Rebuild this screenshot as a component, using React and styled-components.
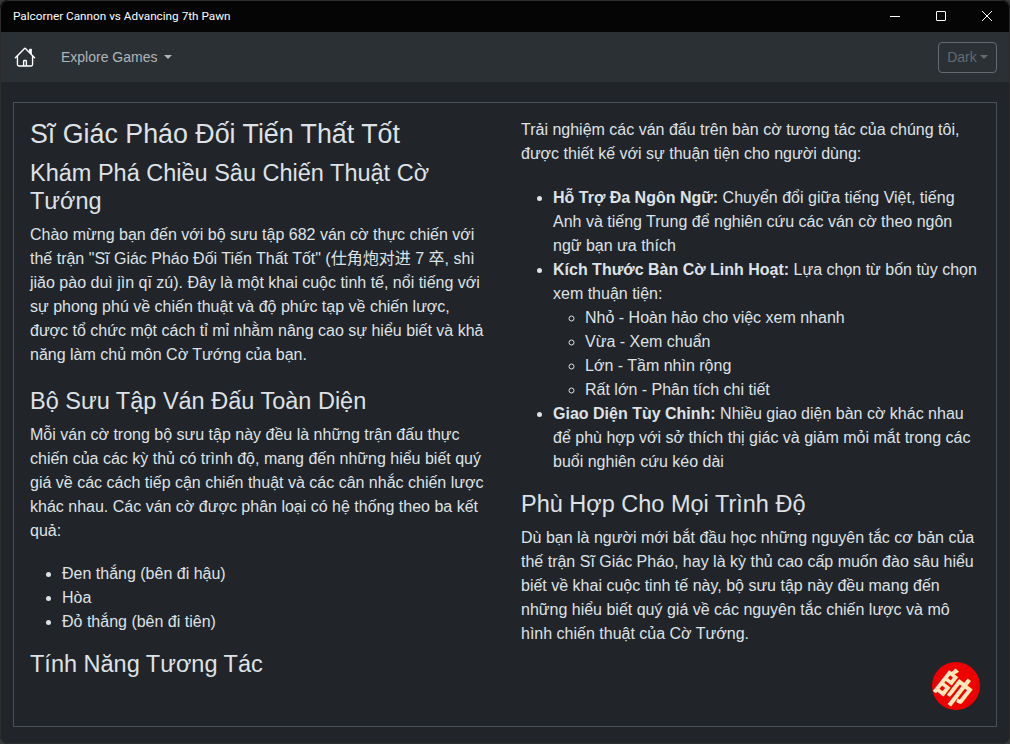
import React from 'react';
import styled, { createGlobalStyle } from 'styled-components';

const GlobalStyle = createGlobalStyle`
  html, body {
    margin: 0;
    height: 100%;
    background: #3a3a3a;
  }
  * {
    box-sizing: border-box;
  }
`;

const Win = styled.div`
  position: relative;
  width: 1010px;
  height: 744px;
  display: flex;
  flex-direction: column;
  border-radius: 8px;
  overflow: hidden;
  background: #212529;
  color: #dee2e6;
  font-family: "Liberation Sans", Arial, "Noto Sans CJK SC", sans-serif;
  font-size: 16px;
  line-height: 24px;

  &::after {
    content: '';
    position: absolute;
    inset: 0;
    border: 1px solid #2c2c2c;
    border-radius: 8px;
    pointer-events: none;
  }
`;

const TitleBar = styled.div`
  height: 32px;
  flex: none;
  display: flex;
  align-items: center;
  justify-content: space-between;
  background: #050505;
  color: #fff;
  font-family: Roboto, "Liberation Sans", sans-serif;
  font-size: 11.75px;
  padding-left: 13px;
`;

const WinButtons = styled.div`
  display: flex;
  height: 100%;
`;

const WinButton = styled.div`
  width: 46px;
  height: 32px;
  display: flex;
  align-items: center;
  justify-content: center;
  color: #fff;
`;

const Navbar = styled.nav`
  height: 50px;
  flex: none;
  display: flex;
  align-items: center;
  background: #2b3035;
  padding: 0 13px 0 14px;
`;

const HomeLink = styled.a`
  display: flex;
  width: 22px;
  color: #fff;
  margin-right: 25px;
`;

const NavLink = styled.a`
  display: flex;
  align-items: center;
  font-size: 14px;
  color: rgba(222, 226, 230, 0.75);
`;

const Caret = styled.span`
  display: inline-block;
  margin-left: ${({ $gap }) => $gap}px;
  border-top: 4.8px solid currentColor;
  border-left: 4.8px solid transparent;
  border-right: 4.8px solid transparent;
`;

const ThemeButton = styled.button`
  margin-left: auto;
  width: 59px;
  height: 31px;
  padding: 0;
  display: flex;
  align-items: center;
  justify-content: center;
  background: transparent;
  border: 1px solid #6c757d;
  border-radius: 4px;
  color: #6c757d;
  font-family: inherit;
  font-size: 14px;
  opacity: 0.85;
`;

const Main = styled.main`
  flex: 1;
  padding: 20px 13px 17px;
  min-height: 0;
`;

const Panel = styled.section`
  height: 100%;
  border: 1px solid #495057;
  padding: 15px 16px;
  columns: 2;
  column-gap: 32px;
  column-fill: auto;
`;

const Title = styled.h1`
  margin: 0 0 7px;
  font-size: 26.8px;
  font-weight: 500;
  line-height: 33.6px;
`;

const Heading = styled.h2`
  margin: 0 0 7px;
  font-size: 23.5px;
  font-weight: 500;
  line-height: 28.8px;
`;

const Text = styled.p`
  margin: 0 0 ${({ $gap = 20 }) => $gap}px;
`;

const List = styled.ul`
  margin: 0 0 16px;
  padding-left: 32px;
`;

const SubList = styled.ul`
  margin: 0;
  padding-left: 32px;
`;

const ColumnBreak = styled.div`
  break-before: column;
`;

const Fab = styled.div`
  position: absolute;
  left: 932px;
  top: 662px;
  width: 48px;
  height: 48px;
  border-radius: 50%;
  background: #ee0000;
  display: flex;
  align-items: center;
  justify-content: center;
`;

const FabGlyph = styled.span`
  color: #ffe9bb;
  font-family: "Noto Sans CJK TC", sans-serif;
  font-size: 35px;
  font-weight: 700;
  line-height: 1;
  transform: rotate(38deg);
`;

const App = () => (
  <>
    <GlobalStyle />
    <Win>
      <TitleBar>
        Palcorner Cannon vs Advancing 7th Pawn
        <WinButtons>
          <WinButton>
            <svg width="10" height="10" viewBox="0 0 10 10" stroke="currentColor" fill="none">
              <path d="M0 5.5h10" />
            </svg>
          </WinButton>
          <WinButton>
            <svg width="10" height="10" viewBox="0 0 10 10" stroke="currentColor" fill="none">
              <rect x="0.5" y="0.5" width="9" height="9" rx="0.5" />
            </svg>
          </WinButton>
          <WinButton>
            <svg width="10" height="10" viewBox="0 0 10 10" stroke="currentColor" fill="none">
              <path d="M0 0l10 10M10 0L0 10" />
            </svg>
          </WinButton>
        </WinButtons>
      </TitleBar>
      <Navbar>
        <HomeLink>
          <svg width="22" height="22" viewBox="0 0 16 16" fill="currentColor">
            <path d="M8.707 1.5a1 1 0 0 0-1.414 0L.646 8.146a.5.5 0 0 0 .708.708L2 8.207V13.5A1.5 1.5 0 0 0 3.5 15h9a1.5 1.5 0 0 0 1.5-1.5V8.207l.646.647a.5.5 0 0 0 .708-.708L13 5.793V2.5a.5.5 0 0 0-.5-.5h-1a.5.5 0 0 0-.5.5v1.293L8.707 1.5ZM13 7.207V13.5a.5.5 0 0 1-.5.5h-9a.5.5 0 0 1-.5-.5V7.207l5-5 5 5Z" />
            <path d="M6.5 14.5v-3.5a1 1 0 0 1 1-1h1a1 1 0 0 1 1 1v3.5h-1V11h-1v3.5h-1Z" />
          </svg>
        </HomeLink>
        <NavLink>Explore Games<Caret $gap={7} /></NavLink>
        <ThemeButton>Dark<Caret $gap={3} /></ThemeButton>
      </Navbar>
      <Main>
        <Panel>
          <Title>Sĩ Giác Pháo Đối Tiến Thất Tốt</Title>
          <Heading>Khám Phá Chiều Sâu Chiến Thuật Cờ Tướng</Heading>
          <Text>
            Chào mừng bạn đến với bộ sưu tập 682 ván cờ thực chiến với thế trận "Sĩ Giác Pháo Đối Tiến Thất Tốt" (仕角炮对进 7 卒, shì jiǎo pào duì jìn qī zú). Đây là một khai cuộc tinh tế, nổi tiếng với sự phong phú về chiến thuật và độ phức tạp về chiến lược, được tổ chức một cách tỉ mỉ nhằm nâng cao sự hiểu biết và khả năng làm chủ môn Cờ Tướng của bạn.
          </Text>
          <Heading>Bộ Sưu Tập Ván Đấu Toàn Diện</Heading>
          <Text $gap={19}>
            Mỗi ván cờ trong bộ sưu tập này đều là những trận đấu thực chiến của các kỳ thủ có trình độ, mang đến những hiểu biết quý giá về các cách tiếp cận chiến thuật và các cân nhắc chiến lược khác nhau. Các ván cờ được phân loại có hệ thống theo ba kết quả:
          </Text>
          <List>
            <li>Đen thắng (bên đi hậu)</li>
            <li>Hòa</li>
            <li>Đỏ thắng (bên đi tiên)</li>
          </List>
          <Heading>Tính Năng Tương Tác</Heading>
          <ColumnBreak />
          <Text>
            Trải nghiệm các ván đấu trên bàn cờ tương tác của chúng tôi, được thiết kế với sự thuận tiện cho người dùng:
          </Text>
          <List>
            <li><strong>Hỗ Trợ Đa Ngôn Ngữ:</strong> Chuyển đổi giữa tiếng Việt, tiếng Anh và tiếng Trung để nghiên cứu các ván cờ theo ngôn ngữ bạn ưa thích</li>
            <li>
              <strong>Kích Thước Bàn Cờ Linh Hoạt:</strong> Lựa chọn từ bốn tùy chọn xem thuận tiện:
              <SubList>
                <li>Nhỏ - Hoàn hảo cho việc xem nhanh</li>
                <li>Vừa - Xem chuẩn</li>
                <li>Lớn - Tầm nhìn rộng</li>
                <li>Rất lớn - Phân tích chi tiết</li>
              </SubList>
            </li>
            <li><strong>Giao Diện Tùy Chỉnh:</strong> Nhiều giao diện bàn cờ khác nhau để phù hợp với sở thích thị giác và giảm mỏi mắt trong các buổi nghiên cứu kéo dài</li>
          </List>
          <Heading>Phù Hợp Cho Mọi Trình Độ</Heading>
          <Text>
            Dù bạn là người mới bắt đầu học những nguyên tắc cơ bản của thế trận Sĩ Giác Pháo, hay là kỳ thủ cao cấp muốn đào sâu hiểu biết về khai cuộc tinh tế này, bộ sưu tập này đều mang đến những hiểu biết quý giá về các nguyên tắc chiến lược và mô hình chiến thuật của Cờ Tướng.
          </Text>
        </Panel>
      </Main>
      <Fab><FabGlyph>帥</FabGlyph></Fab>
    </Win>
  </>
);

export default App;
